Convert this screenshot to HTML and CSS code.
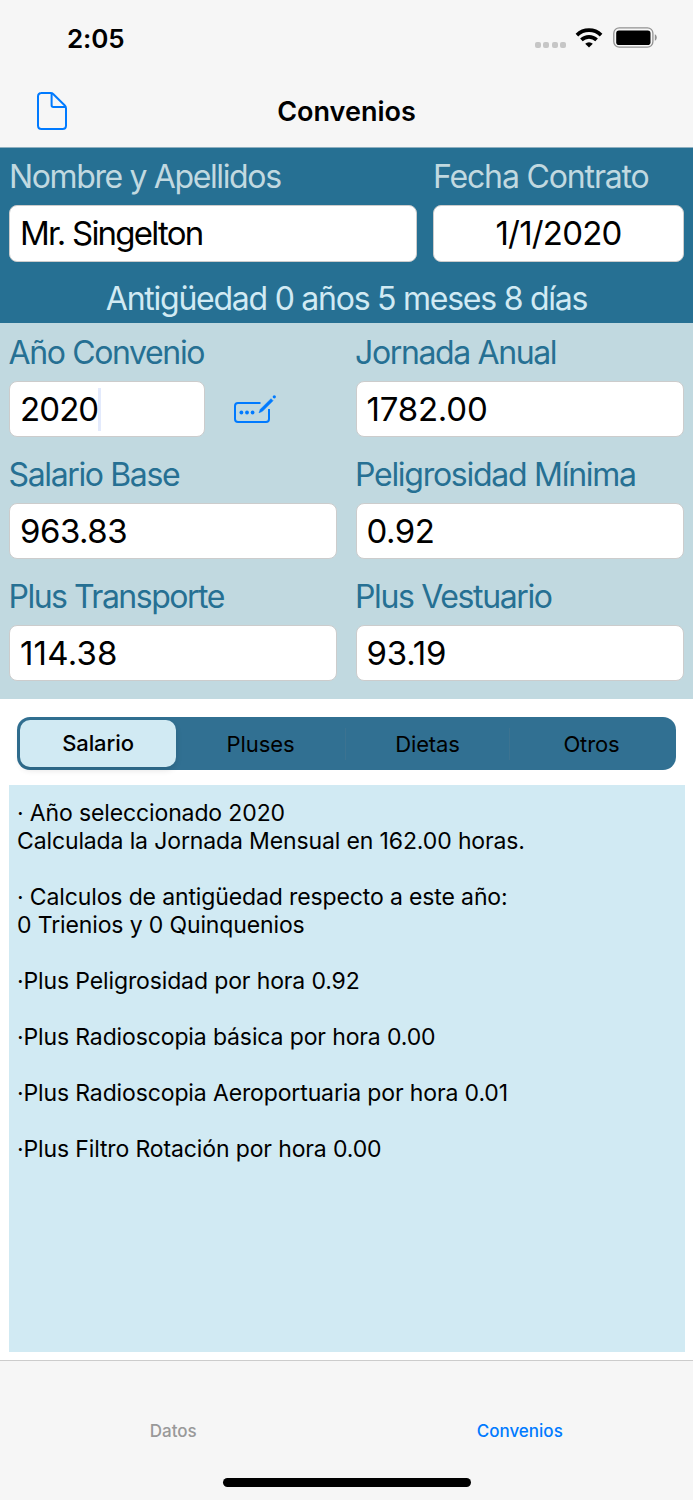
FILE: index.html
```html
<!DOCTYPE HTML>
<html lang="es">
<head>
<meta charset="utf-8">
<title>Convenios</title>
<link rel="stylesheet" href="styles.css">
</head>
<body>
<div class="status-bar">
	<span class="clock">2:05</span>
	<div class="status-icons">
		<div class="signal"><i></i><i></i><i></i><i></i></div>
		<svg class="wifi" width="28" height="22" viewBox="0 0 28 22">
			<g fill="none" stroke="#000" stroke-width="3.7">
				<path d="M1.9 8.1 A17.3 17.3 0 0 1 26.1 8.1"/>
				<path d="M6.4 12.9 A11 11 0 0 1 21.6 12.9"/>
			</g>
			<path d="M14 20.6 L10.2 16.7 A5.5 5.5 0 0 1 17.8 16.7 Z"/>
		</svg>
		<svg class="battery" width="44" height="22" viewBox="0 0 44 22">
			<rect x="0.8" y="0.8" width="39.1" height="19.4" rx="5.5" fill="none" stroke="#929292" stroke-width="1.3"/>
			<rect x="3.2" y="3.6" width="34.3" height="14.4" rx="2.8"/>
			<path d="M41.8 7.2 C44.4 8.4 44.4 12.6 41.8 13.8 Z" fill="#929292"/>
		</svg>
	</div>
</div>
<div class="nav-bar">
	<svg class="doc-btn" width="32" height="40" viewBox="0 0 32 40">
		<g fill="none" stroke="#007aff" stroke-width="2" stroke-linejoin="round">
			<path d="M5 2 H14.6 Q16.2 2 17.4 3.2 L28.6 14.2 Q30 15.6 30 17.4 V34.5 Q30 38 26.5 38 H5.5 Q2 38 2 34.5 V5.5 Q2 2 5.5 2"/>
			<path d="M15.6 2.4 V14.3 Q15.6 16 17.3 16 H29.5"/>
		</g>
	</svg>
	<span class="nav-title">Convenios</span>
</div>
<div class="person">
	<div class="label">Nombre y Apellidos</div>
	<div class="label date">Fecha Contrato</div>
	<div class="field name">Mr. Singelton</div>
	<div class="field center">1/1/2020</div>
	<div class="seniority">Antigüedad 0 años 5 meses 8 días</div>
</div>
<div class="agreement">
	<div class="cell">
		<div class="label">Año Convenio</div>
		<div class="year-row">
			<div class="field year">2020<i class="caret"></i></div>
			<svg class="edit-btn" width="44" height="32" viewBox="0 0 44 32">
				<path d="M27.5 9 H5 Q2 9 2 12 V25 Q2 28 5 28 H33 Q36 28 36 25 V15" fill="none" stroke="#007aff" stroke-width="2"/>
				<path d="M26 18.8 L27.4 15.3 L38 4.7 L40 6.7 L29.4 17.3 Z" fill="#007aff" stroke="#007aff" stroke-width=".6" stroke-linejoin="round"/>
				<g fill="#007aff">
					<circle cx="41.3" cy="2.8" r="1.6"/>
					<circle cx="8.4" cy="18.5" r="1.9"/>
					<circle cx="14" cy="18.5" r="1.9"/>
					<circle cx="19.6" cy="18.5" r="1.9"/>
				</g>
			</svg>
		</div>
	</div>
	<div class="cell">
		<div class="label">Jornada Anual</div>
		<div class="field hours">1782.00</div>
	</div>
	<div class="cell">
		<div class="label">Salario Base</div>
		<div class="field">963.83</div>
	</div>
	<div class="cell">
		<div class="label danger">Peligrosidad Mínima</div>
		<div class="field">0.92</div>
	</div>
	<div class="cell">
		<div class="label transport">Plus Transporte</div>
		<div class="field ones">114.38</div>
	</div>
	<div class="cell">
		<div class="label">Plus Vestuario</div>
		<div class="field hours">93.19</div>
	</div>
</div>
<div class="segments">
	<div class="seg active">Salario</div>
	<div class="seg">Pluses</div>
	<div class="seg line">Dietas</div>
	<div class="seg line">Otros</div>
</div>
<div class="report">· Año seleccionado 2020
Calculada la Jornada Mensual en 162.00 horas.

· Calculos de antigüedad respecto a este año:
0 Trienios y 0 Quinquenios

·Plus Peligrosidad por hora 0.92

·Plus Radioscopia básica por hora 0.00

·Plus Radioscopia Aeroportuaria por hora 0.01

·Plus Filtro Rotación por hora 0.00</div>
<div class="tab-bar">
	<div class="tabs">
		<span class="tab">Datos</span>
		<span class="tab active">Convenios</span>
	</div>
	<div class="home-line"></div>
</div>
</body>
</html>
```
FILE: styles.css
```css
*{
	box-sizing: border-box;
}
body{
	margin: 0;
	width: 693px;
	height: 1500px;
	display: flex;
	flex-direction: column;
	overflow: hidden;
	background: #ffffff;
	color: #000000;
	font-family: Inter, "Liberation Sans", sans-serif;
}
.status-bar{
	height: 75px;
	padding: 0 36px 0 67px;
	display: flex;
	justify-content: space-between;
	background: #f6f6f6;
}
.clock{
	padding-top: 23px;
	font-size: 26px;
	line-height: 32px;
	font-weight: 600;
	letter-spacing: -0.1px;
}
.status-icons{
	display: flex;
	padding-top: 27px;
}
.signal{
	display: flex;
	gap: 2.5px;
	padding-top: 15px;
	margin-right: 9px;
}
.signal i{
	width: 6px;
	height: 6px;
	border-radius: 2px;
	background: #c6c6c6;
}
.wifi{
	margin-right: 10px;
}
.nav-bar{
	height: 73px;
	padding-left: 36px;
	display: flex;
	align-items: center;
	background: #f6f6f6;
	border-bottom: 1px solid #8fb0c0;
}
.doc-btn{
	flex: none;
}
.nav-title{
	flex: 1;
	padding-right: 68px;
	text-align: center;
	font-size: 27px;
	font-weight: 600;
}
.person{
	height: 175px;
	padding: 9px 9px 0;
	display: grid;
	grid-template-columns: 408px 251px;
	grid-template-rows: 39px 9px 57px 1fr;
	column-gap: 16px;
	background: #267093;
}
.person .label{
	color: #c1d9e0;
}
.person .label.date{
	letter-spacing: -1.15px;
}
.person .field{
	grid-row: 3;
	height: 57px;
	padding-bottom: 2px;
}
.label{
	height: 39px;
	font-size: 32px;
	line-height: 39px;
	letter-spacing: -1.37px;
	white-space: nowrap;
}
.label.danger{
	letter-spacing: -1.27px;
}
.label.transport{
	letter-spacing: -1.5px;
}
.field{
	height: 56px;
	padding: 0 10px;
	display: flex;
	align-items: center;
	background: #ffffff;
	border: 1px solid #cccccc;
	border-radius: 8px;
	font-size: 33px;
	letter-spacing: -0.5px;
}
.field.name{
	letter-spacing: -1.75px;
}
.field.center{
	justify-content: center;
	letter-spacing: -0.8px;
}
.field.hours{
	letter-spacing: -0.2px;
}
.field.ones{
	letter-spacing: 0.2px;
}
.seniority{
	grid-column: 1 / 3;
	grid-row: 4;
	padding-top: 17px;
	text-align: center;
	color: #d1eaf3;
	font-size: 32px;
	line-height: 39px;
	letter-spacing: -1.25px;
}
.agreement{
	height: 376px;
	padding: 10px 9px 0;
	display: grid;
	grid-template-columns: 328px 328px;
	grid-auto-rows: 122px;
	column-gap: 18.5px;
	background: #c1d9e0;
	color: #267093;
}
.agreement .label{
	margin-left: -0.5px;
}
.agreement .field{
	margin-top: 9px;
	color: #000000;
}
.year-row{
	display: flex;
}
.field.year{
	width: 196px;
	letter-spacing: -0.9px;
}
.caret{
	width: 3px;
	height: 43px;
	background: #e3eafc;
}
.edit-btn{
	margin: 22px 0 0 28px;
}
.segments{
	height: 53px;
	margin: 18px 17px 0;
	padding: 3px;
	display: grid;
	grid-template-columns: 156px 169px 164px 164px;
	align-items: center;
	background: #317092;
	border-radius: 13px;
	font-size: 22px;
	letter-spacing: -0.1px;
}
.seg{
	line-height: 32px;
	text-align: center;
}
.seg.active{
	line-height: 47px;
	border-radius: 10px;
	background: #d1eaf3;
	font-weight: 500;
	box-shadow: 0 3px 6px rgba(0, 0, 0, 0.12);
}
.seg.line{
	border-left: 1px solid #3c7391;
}
.report{
	height: 567px;
	margin: 15px 8.5px 0;
	padding: 14px 8.5px;
	background: #d1eaf3;
	font-size: 23px;
	line-height: 28px;
	letter-spacing: -0.13px;
	white-space: pre-line;
}
.tab-bar{
	flex: 1;
	margin-top: 8px;
	display: flex;
	flex-direction: column;
	align-items: center;
	background: #f6f6f6;
	border-top: 1px solid #cccccc;
}
.tabs{
	width: 100%;
	height: 117px;
	padding-top: 60px;
	display: flex;
}
.tab{
	flex: 1;
	text-align: center;
	font-size: 17px;
	line-height: 20px;
	font-weight: 500;
	color: #999999;
}
.tab.active{
	color: #007aff;
}
.home-line{
	width: 248px;
	height: 9px;
	border-radius: 5px;
	background: #000000;
}
```
